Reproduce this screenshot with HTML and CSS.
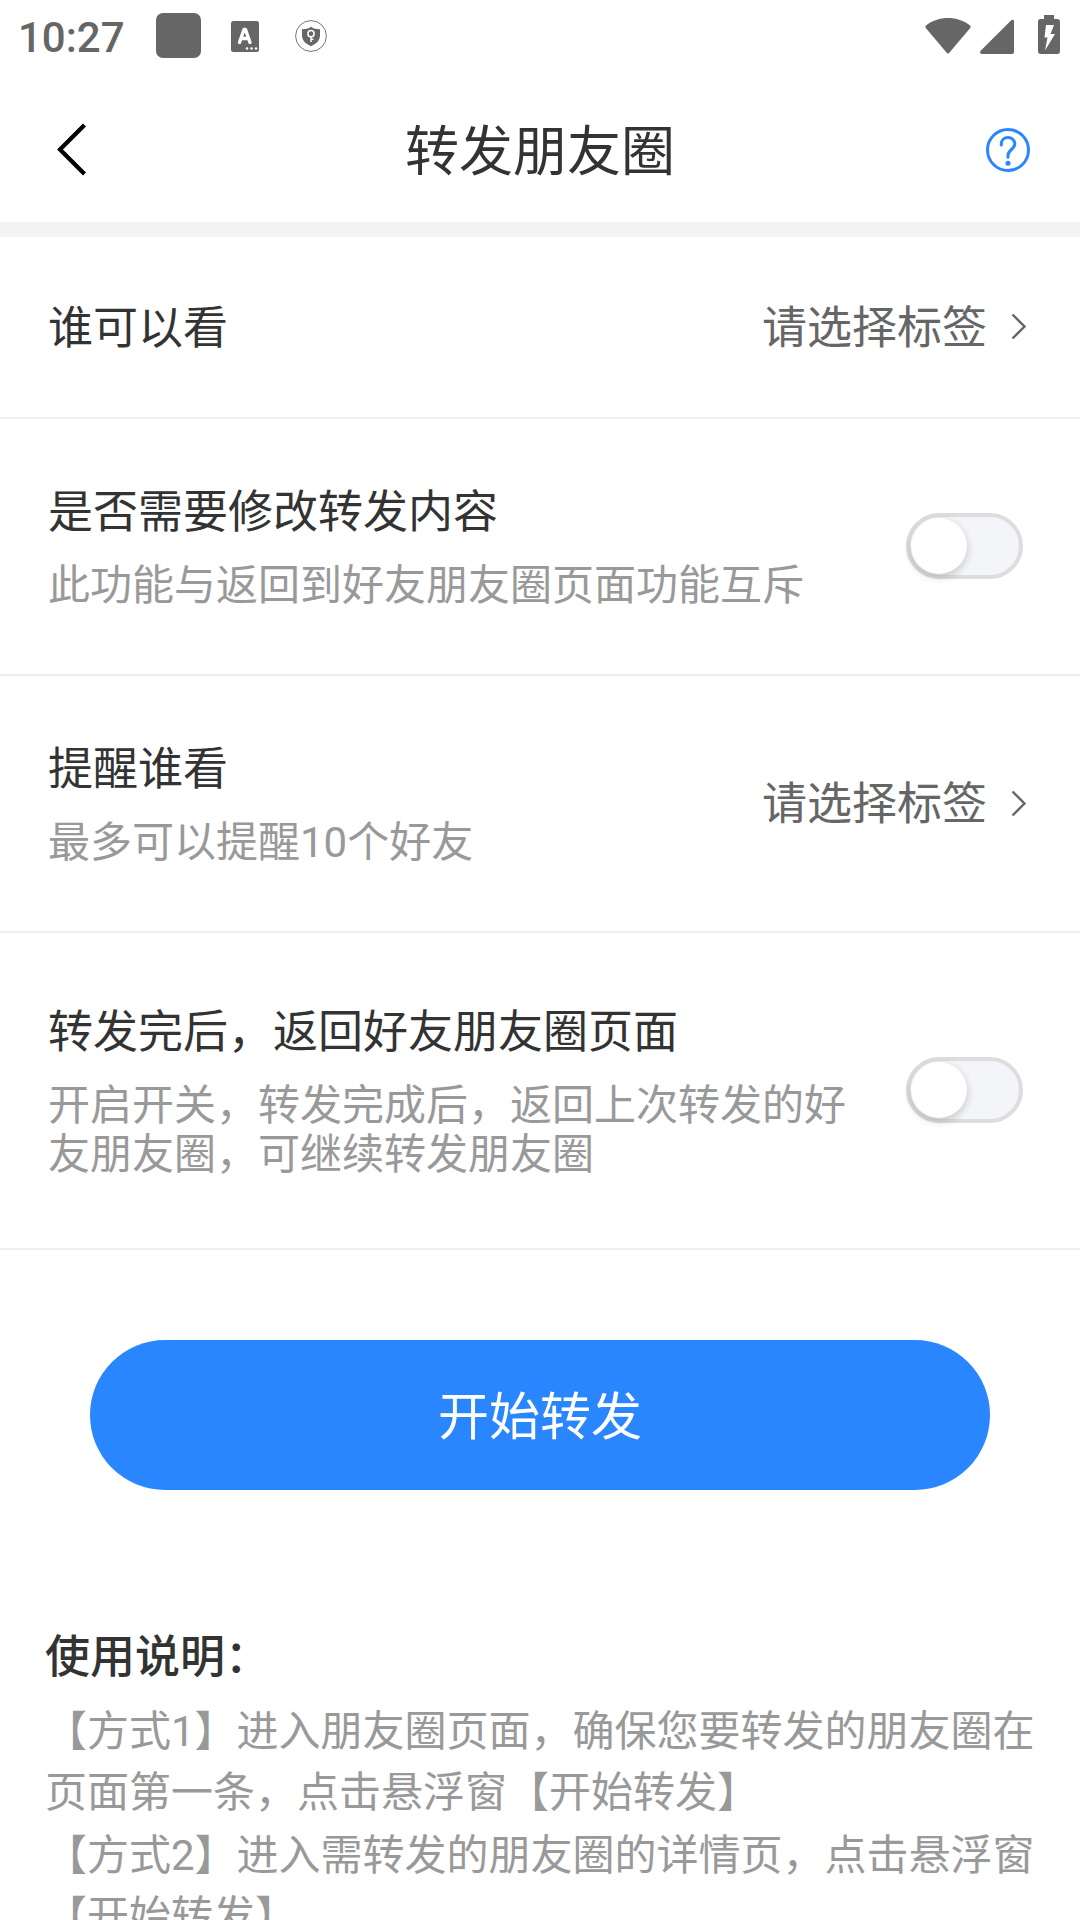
FILE: index.html
```html
<!DOCTYPE html>
<html lang="zh-CN">
<head>
  <meta charset="UTF-8">
  <meta name="viewport" content="width=device-width, initial-scale=1.0">
  <title>转发朋友圈</title>
  <link rel="stylesheet" href="styles.css">
</head>
<body>
  <div class="status-bar">
    <span class="time">10:27</span>
    <span class="app-square"></span>
    <svg class="icon-input" width="28" height="31" viewBox="0 0 28 31">
      <rect width="28" height="31" rx="2.5" fill="#666"/>
      <path d="M8.500 21.500L13 8.500h1.500L19 21.500M10.500 17.500h7" fill="none" stroke="#fff" stroke-width="3.400" stroke-linecap="round" stroke-linejoin="round"/>
      <g fill="#fff"><circle cx="16" cy="27.500" r="1.300"/><circle cx="20.500" cy="27.500" r="1.300"/><circle cx="25" cy="27.500" r="1.300"/></g>
    </svg>
    <svg class="icon-shield" width="32" height="32" viewBox="0 0 32 32">
      <circle cx="16" cy="16" r="15.4" fill="none" stroke="#777" stroke-width="1"/>
      <path d="M16 6.800c2.500 1.800 5.500 2.400 9 2.500v6.200c0 5.200-4 8.500-9 10.700c-5-2.200-9-5.500-9-10.700V9.300c3.500-.1 6.500-.7 9-2.500z" fill="#666"/>
      <circle cx="16" cy="13.700" r="3.100" fill="none" stroke="#fff" stroke-width="1.500"/>
      <path d="M16 16.500v5.500M16 19.200h2.500" stroke="#fff" stroke-width="1.500"/>
    </svg>
    <div class="status-right">
      <svg width="46" height="37" viewBox="0 0 46 37">
        <path d="M1 8.500C7 3.500 15 1 23 1s16 2.500 22 7.500c.9.800.8 1.600.2 2.400L24.300 35.800c-.8.900-1.800.9-2.600 0L.8 10.900C.2 10.100.1 9.300 1 8.500z" fill="#666"/>
      </svg>
      <svg class="icon-signal" width="34" height="35" viewBox="0 0 34 35">
        <path d="M31 1.500c1.200-1.200 3-.6 3 1V33c0 1.200-.8 2-2 2H2c-1.900 0-2.600-1.800-1.300-3.200z" fill="#666"/>
      </svg>
      <svg class="icon-battery" width="22" height="39" viewBox="0 0 22 39">
        <path d="M6 0h10v4h3.500C21 4 22 5 22 6.500v30c0 1.500-1 2.500-2.500 2.500h-17C1 39 0 38 0 36.500v-30C0 5 1 4 2.500 4H6z" fill="#666"/>
        <path d="M8 10h8l-3.500 9H17L7 35.500l2.500-13h-3z" fill="#fff"/>
      </svg>
    </div>
  </div>

  <div class="header">
    <svg class="back" width="30" height="54" viewBox="0 0 30 54">
      <path d="M27.500 2L3 26.500L27.500 51" fill="none" stroke="#000" stroke-width="4.200"/>
    </svg>
    <h1>转发朋友圈</h1>
    <svg class="help" width="44" height="44" viewBox="0 0 44 44" fill="none" stroke="#2a86ff" stroke-width="3">
      <circle cx="22" cy="22" r="20.500"/>
      <path d="M15.300 17v-1c0-3.800 2.900-6.500 6.700-6.500s6.800 2.700 6.800 6.300c0 2.700-1.500 4.200-3.300 5.700c-2.200 1.900-3.500 3.200-3.500 5.800v2" stroke-linecap="round"/>
      <circle cx="22" cy="35.200" r="2.500" fill="#2a86ff" stroke="none"/>
    </svg>
  </div>

  <div class="row row-short">
    <div class="label">谁可以看</div>
    <div class="picker">
      请选择标签
      <svg width="16" height="27" viewBox="0 0 16 27"><path d="M1.500 1.500l12 12l-12 12" fill="none" stroke="#666" stroke-width="2.400"/></svg>
    </div>
  </div>

  <div class="row">
    <div class="text">
      <div class="label">是否需要修改转发内容</div>
      <div class="desc">此功能与返回到好友朋友圈页面功能互斥</div>
    </div>
    <div class="switch"><span class="knob"></span></div>
  </div>

  <div class="row">
    <div class="text">
      <div class="label">提醒谁看</div>
      <div class="desc">最多可以提醒10个好友</div>
    </div>
    <div class="picker">
      请选择标签
      <svg width="16" height="27" viewBox="0 0 16 27"><path d="M1.500 1.500l12 12l-12 12" fill="none" stroke="#666" stroke-width="2.400"/></svg>
    </div>
  </div>

  <div class="row row-tall">
    <div class="text">
      <div class="label">转发完后，返回好友朋友圈页面</div>
      <div class="desc">开启开关，转发完成后，返回上次转发的好友朋友圈，可继续转发朋友圈</div>
    </div>
    <div class="switch"><span class="knob"></span></div>
  </div>

  <button class="start">开始转发</button>

  <div class="notes">
    <h2>使用说明：</h2>
    <p>【方式1】进入朋友圈页面，确保您要转发的朋友圈在页面第一条，点击悬浮窗【开始转发】</p>
    <p>【方式2】进入需转发的朋友圈的详情页，点击悬浮窗【开始转发】</p>
  </div>
</body>
</html>
```
FILE: styles.css
```css
* {
  box-sizing: border-box;
}

body {
  margin: 0;
  height: 1920px;
  overflow: hidden;
  background-color: #fff;
  color: #333;
  font-family: Roboto, "Noto Sans CJK SC", sans-serif;
  text-spacing-trim: space-all;
}

svg {
  display: block;
  flex-shrink: 0;
}

.status-bar {
  display: flex;
  align-items: center;
  height: 72px;
  padding: 0 20px 0 18px;
}

.time {
  width: 138px;
  padding-top: 2px;
  color: #666;
  font-size: 42px;
  font-weight: 500;
}

.app-square {
  width: 45px;
  height: 45px;
  margin-top: -1px;
  border-radius: 7px;
  background-color: #666;
}

.icon-input {
  margin-left: 30px;
}

.icon-shield {
  margin-left: 36px;
}

.status-right {
  display: flex;
  align-items: flex-end;
  margin-left: auto;
  margin-bottom: 3px;
}

.icon-signal {
  margin-left: 9px;
}

.icon-battery {
  margin-left: 24px;
}

.header {
  display: flex;
  align-items: center;
  justify-content: space-between;
  height: 165px;
  padding: 6px 50px 0 57px;
  border-bottom: 15px solid #f4f4f4;
}

.back {
  margin-right: 7px;
}

h1 {
  margin: 0;
  padding-top: 6px;
  font-size: 54px;
  font-weight: 400;
  line-height: 64px;
}

.row {
  display: flex;
  align-items: center;
  justify-content: space-between;
  height: 257px;
  padding: 0 57px 0 48px;
  border-bottom: 2px solid #eee;
}

.row-short {
  height: 182px;
}

.row-tall {
  height: 317px;
}

.text {
  width: 810px;
  margin-right: -200px;
  padding-top: 1px;
}

.label {
  padding-top: 2px;
  font-size: 45px;
  line-height: 53px;
}

.desc {
  margin-top: 22px;
  color: #999;
  font-size: 42px;
  line-height: 49px;
}

.picker {
  display: flex;
  align-items: center;
  gap: 24px;
  margin-right: -4px;
  padding-top: 2px;
  color: #666;
  font-size: 45px;
  line-height: 53px;
}

.picker svg {
  margin-bottom: 3px;
}

.switch {
  width: 117px;
  height: 66px;
  margin-bottom: 2px;
  padding: 1px;
  border: 4px solid #ddd;
  border-radius: 33px;
  background-color: #f3f5f8;
}

.knob {
  display: block;
  width: 56px;
  height: 56px;
  border-radius: 50%;
  background-color: #fff;
  box-shadow: 0 3px 9px rgba(0, 0, 0, 0.2);
}

.start {
  display: block;
  width: 900px;
  height: 150px;
  margin: 90px auto 0;
  padding-bottom: 5px;
  border: none;
  border-radius: 75px;
  background-color: #2a86ff;
  color: #fff;
  font-family: inherit;
  font-size: 51px;
}

.notes {
  padding: 138px 40px 0 45px;
}

h2 {
  margin: 0 0 13px;
  font-size: 45px;
  font-weight: 500;
  line-height: 60px;
}

p {
  margin: 0 0 2px;
  color: #999;
  font-size: 42px;
  line-height: 61px;
}
```
